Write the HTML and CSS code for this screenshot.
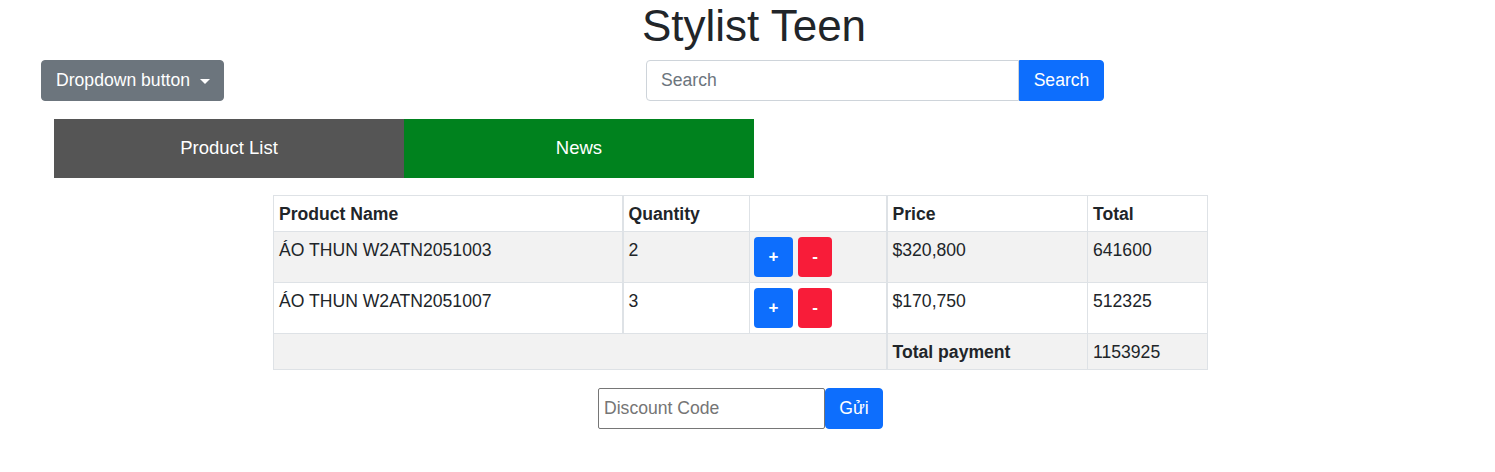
FILE: index.html
```html
<!DOCTYPE html>
<html lang="vi">
<head>
<meta charset="utf-8">
<title>Stylist Teen</title>
<link rel="stylesheet" href="styles.css">
</head>
<body>
  <h1 class="title">Stylist Teen</h1>
  <div class="toolbar">
    <button class="btn btn-secondary dropdown">Dropdown button <span class="caret"></span></button>
    <form class="search">
      <input class="search-input" type="text" placeholder="Search">
      <button class="btn btn-primary search-btn" type="button">Search</button>
    </form>
  </div>
  <nav class="tabs">
    <a class="tab tab-gray">Product List</a>
    <a class="tab tab-green">News</a>
  </nav>
  <div class="content">
    <table class="cart">
      <colgroup>
        <col class="c1"><col class="c2"><col class="c3"><col class="c4"><col class="c5">
      </colgroup>
      <thead>
        <tr>
          <th>Product Name</th>
          <th class="thick">Quantity</th>
          <th></th>
          <th class="thick">Price</th>
          <th>Total</th>
        </tr>
      </thead>
      <tbody>
        <tr class="odd">
          <td>ÁO THUN W2ATN2051003</td>
          <td class="thick">2</td>
          <td class="btn-cell"><div class="qty"><button class="sbtn plus">+</button><button class="sbtn minus">-</button></div></td>
          <td class="thick">$320,800</td>
          <td>641600</td>
        </tr>
        <tr>
          <td>ÁO THUN W2ATN2051007</td>
          <td class="thick">3</td>
          <td class="btn-cell"><div class="qty"><button class="sbtn plus">+</button><button class="sbtn minus">-</button></div></td>
          <td class="thick">$170,750</td>
          <td>512325</td>
        </tr>
        <tr class="odd">
          <td colspan="3"></td>
          <td class="thick"><strong>Total payment</strong></td>
          <td>1153925</td>
        </tr>
      </tbody>
    </table>
    <form class="discount">
      <input class="discount-input" type="text" placeholder="Discount Code">
      <button class="btn btn-primary send-btn" type="button">Gửi</button>
    </form>
  </div>
</body>
</html>
```
FILE: styles.css
```css
* { box-sizing: border-box; }
body {
  margin: 0;
  font-family: "Liberation Sans", Arial, sans-serif;
  color: #212529;
  background: #fff;
}
.title {
  margin: 0 0 9px 0;
  padding-left: 13px;
  text-align: center;
  font-size: 44px;
  font-weight: 400;
  line-height: 51px;
}
.toolbar {
  display: flex;
  align-items: center;
  padding-left: 41px;
}
.btn {
  font-family: inherit;
  border: 1px solid transparent;
  color: #fff;
  cursor: pointer;
}
.btn-secondary { background: #6c757d; border-color: #6c757d; }
.btn-primary { background: #0d6efd; border-color: #0d6efd; }
.dropdown {
  width: 183px;
  height: 41px;
  font-size: 17.6px;
  border-radius: 4px;
  padding: 0 0 0 14px;
  text-align: left;
  display: flex;
  align-items: center;
}
.caret {
  display: inline-block;
  margin-left: 10px;
  border-top: 5px solid #fff;
  border-left: 5px solid transparent;
  border-right: 5px solid transparent;
  margin-top: 1px;
}
.search {
  display: flex;
  margin: 0 0 0 422px;
}
.search-input {
  width: 373px;
  height: 41px;
  border: 1px solid #ced4da;
  border-radius: 4px 0 0 4px;
  padding: 0 14px;
  font-family: inherit;
  font-size: 17.6px;
  color: #212529;
}
.search-input::placeholder { color: #6c757d; }
.search-btn {
  width: 85px;
  height: 41px;
  font-size: 17.6px;
  border-radius: 0 4px 4px 0;
  padding: 0;
}
.tabs {
  display: flex;
  margin: 18px 0 0 54px;
}
.tab {
  width: 350px;
  height: 59px;
  display: flex;
  align-items: center;
  justify-content: center;
  color: #fff;
  font-size: 18.5px;
  padding-bottom: 2px;
}
.tab-gray { background: #555555; }
.tab-green { background: #00821e; }
.content {
  width: 1481px;
  display: flex;
  flex-direction: column;
  align-items: center;
  padding-top: 17px;
}
.cart {
  width: 934px;
  table-layout: fixed;
  border-collapse: collapse;
  font-size: 17.6px;
  line-height: 25px;
}
.c1 { width: 349px; }
.c2 { width: 127px; }
.c3 { width: 137px; }
.c4 { width: 201px; }
.c5 { width: 120px; }
.cart th, .cart td {
  border: 1px solid #dee2e6;
  padding: 6px 5px 4px;
  text-align: left;
  vertical-align: top;
  height: 35px;
}
.cart .btn-cell { padding: 5px 4px; }
.cart th { font-weight: 700; }
.cart .thick { border-left: 2px solid #dee2e6; }
.cart .odd td { background: #f2f2f2; }
.qty { display: flex; gap: 5px; }
.sbtn {
  height: 40px;
  border: none;
  border-radius: 4px;
  color: #fff;
  font-family: inherit;
  font-size: 17px;
  font-weight: 700;
  line-height: 40px;
  padding: 0;
}
.plus { width: 39px; background: #0d6efd; }
.minus { width: 34px; background: #f81c39; }
.discount {
  display: flex;
  margin-top: 18px;
}
.discount-input {
  width: 227px;
  height: 41px;
  border: 1px solid #767676;
  border-radius: 2px;
  padding: 0 5px;
  font-family: inherit;
  font-size: 17.6px;
}
.discount-input::placeholder { color: #757575; }
.send-btn {
  width: 58px;
  height: 41px;
  font-size: 17.6px;
  border-radius: 4px;
  padding: 0;
}
```
